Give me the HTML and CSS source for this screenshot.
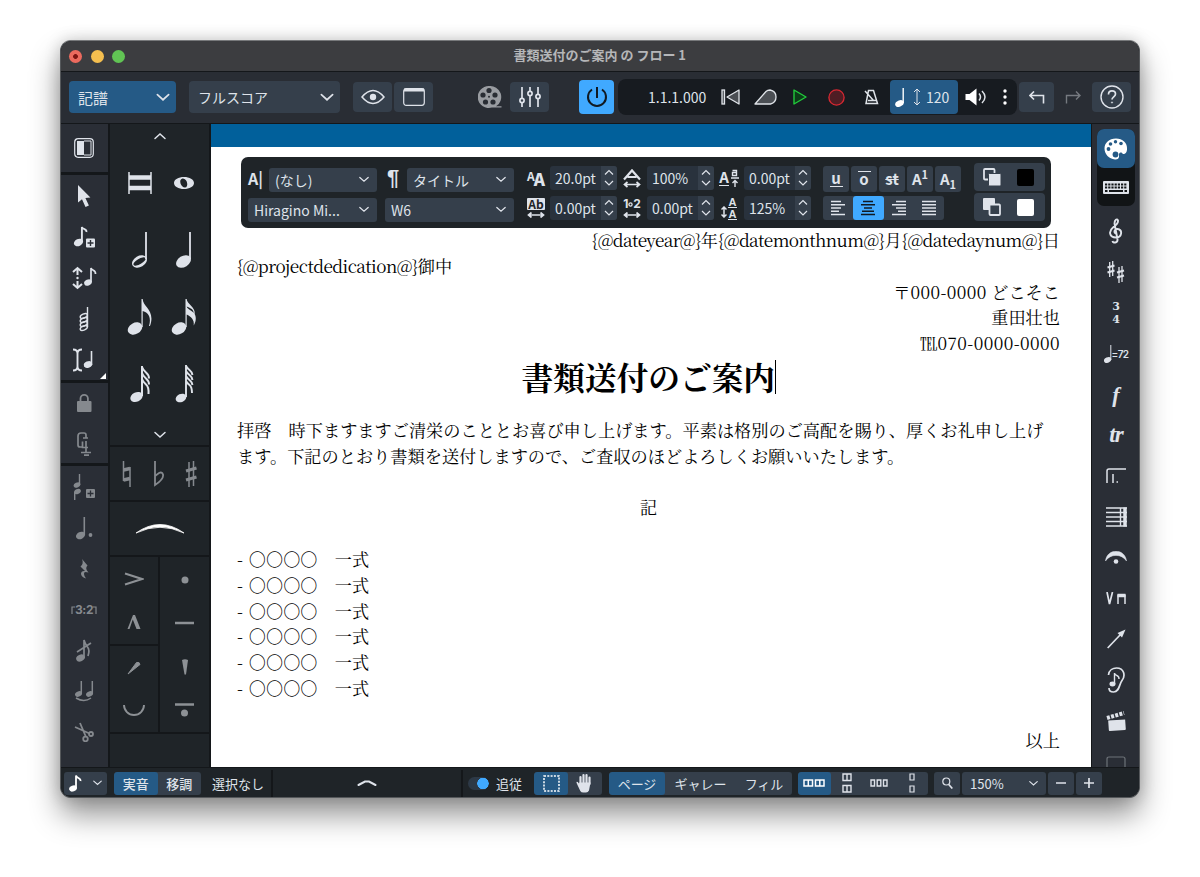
FILE: index.html
```html
<!DOCTYPE html>
<html lang="ja">
<head>
    <meta charset="UTF-8">
    <meta name="viewport" content="width=device-width, initial-scale=1.0">
    <title>書類送付のご案内 の フロー 1</title>
    <link rel="stylesheet" href="styles.css">
</head>
<body>
    <!-- shared symbols -->
    <svg class="defs" width="0" height="0">
        <symbol id="chev" viewBox="0 0 12 8"><path d="M1 1.5l5 4.5 5-4.5" fill="none" stroke="currentColor" stroke-width="1.5" stroke-linecap="round"/></symbol>
        <symbol id="spin" viewBox="0 0 16 24"><path d="M4 8.500l4-4 4 4M4 15l4 4 4-4" fill="none" stroke="currentColor" stroke-width="1.200"/></symbol>
        <symbol id="quarter" viewBox="0 0 24 40"><ellipse cx="11.500" cy="31.500" rx="8" ry="5.600" transform="rotate(-32 11.500 31.500)" fill="currentColor"/><path d="M18 2v27" stroke="currentColor" stroke-width="1.800"/></symbol>
        <symbol id="arrow-h" viewBox="0 0 18 6"><path d="M2 3h14M4.500 .5L1.500 3l3 2.500M13.500 .5l3 2.500-3 2.500" fill="none" stroke="currentColor" stroke-width="1.700"/></symbol>
    </svg>

    <div class="window">
        <div class="titlebar">
            <span class="light red"></span>
            <span class="light yellow"></span>
            <span class="light green"></span>
            <div class="title">書類送付のご案内 の フロー 1</div>
        </div>

        <div class="toolbar">
            <div class="select mode">記譜<svg width="14" height="9"><use href="#chev"/></svg></div>
            <div class="select layout">フルスコア<svg width="14" height="9"><use href="#chev"/></svg></div>
            <div class="btn eye">
                <svg width="24" height="16" viewBox="0 0 24 16"><path d="M1 8Q12-5 23 8Q12 21 1 8z" fill="none" stroke="currentColor" stroke-width="1.500"/><circle cx="12" cy="8" r="3.200" fill="currentColor"/></svg>
            </div>
            <div class="btn win">
                <svg width="22" height="18" viewBox="0 0 22 18"><rect x=".7" y=".7" width="20.600" height="16.600" rx="2.500" fill="none" stroke="currentColor" stroke-width="1.200"/><path d="M1 2h20" stroke="currentColor" stroke-width="3"/></svg>
            </div>
            <div class="film">
                <svg width="24" height="24" viewBox="0 0 24 24"><path d="M11 1a11 11 0 1 0 3 21.500h9.500v-1.200H18A11 11 0 0 0 11 1z" fill="currentColor"/><g fill="#292d34"><circle cx="11" cy="5.500" r="2.600"/><circle cx="17" cy="10" r="2.600"/><circle cx="15" cy="17" r="2.600"/><circle cx="7.500" cy="17" r="2.600"/><circle cx="5" cy="10" r="2.600"/><circle cx="11" cy="11.800" r="1"/></g></svg>
            </div>
            <div class="btn mixer">
                <svg width="22" height="20" viewBox="0 0 22 20" fill="none" stroke="currentColor" stroke-width="1.700"><path d="M3 0v11M3 16v4M11 0v4M11 9v11M19 0v7M19 12v8"/><circle cx="3" cy="13.500" r="2.100"/><circle cx="11" cy="6.500" r="2.100"/><circle cx="19" cy="9.500" r="2.100"/></svg>
            </div>
            <div class="power">
                <svg width="22" height="22" viewBox="0 0 22 22" fill="none" stroke="currentColor" stroke-width="2"><path d="M11 1v11M6 3.500a9 9 0 1 0 10 0"/></svg>
            </div>
            <div class="transport">
                <span class="time">1.1.1.000</span>
                <svg width="19" height="16" viewBox="0 0 19 16" fill="#4b4f54" stroke="#dfe3e8" stroke-width="1.300"><rect x="1" y="1" width="2.500" height="14"/><path d="M18 1v14L6 8z" stroke-linejoin="round"/></svg>
                <svg class="rewind" width="23" height="16" viewBox="0 0 23 16" fill="#4b4f54" stroke="#dfe3e8" stroke-width="1.300"><path d="M1 15h15.500q5.500-1.500 5.500-7 0-6-6-7-2.500 0-4 1.500z" stroke-linejoin="round"/></svg>
                <svg class="play" width="14" height="16" viewBox="0 0 14 16"><path d="M1 1v14l12-7z" fill="#0c3d18" stroke="#22c93b" stroke-width="1.400" stroke-linejoin="round"/></svg>
                <svg class="rec" width="17" height="17" viewBox="0 0 17 17"><circle cx="8.500" cy="8.500" r="7.600" fill="#4f1d24" stroke="#d92832" stroke-width="1.300"/></svg>
                <svg class="metro" width="15" height="16" viewBox="0 0 15 16" fill="none" stroke="#dfe3e8" stroke-width="1.500"><path d="M4.500 1.500h5l4 13H2z M4 11.500h8M1 2l8.500 9.500"/></svg>
                <div class="tempo">
                    <svg width="10" height="20" viewBox="0 0 10 20"><ellipse cx="4.500" cy="16.500" rx="4.500" ry="3.100" transform="rotate(-25 4.500 16.500)" fill="#fff"/><path d="M8.200 1v15" stroke="#fff" stroke-width="1.400"/></svg>
                    <svg class="updown" width="8" height="18" viewBox="0 0 8 18" fill="none" stroke="currentColor"><path d="M4 1v16M1 4l3-3 3 3M1 14l3 3 3-3"/></svg>
                    120
                </div>
                <svg class="speaker" width="22" height="18" viewBox="0 0 22 18"><path d="M.5 6h4l7-5.500v17L4.500 12h-4z" fill="#fff"/><path d="M14 5.500q3 3.500 0 7M17 3q6 6 0 12" fill="none" stroke="#dfe3e8" stroke-width="1.500"/></svg>
                <svg class="dots" width="4" height="16" viewBox="0 0 4 16" fill="#fff"><circle cx="2" cy="2" r="1.700"/><circle cx="2" cy="8" r="1.700"/><circle cx="2" cy="14" r="1.700"/></svg>
            </div>
            <div class="btn undo">
                <svg width="16" height="13" viewBox="0 0 16 13" fill="none" stroke="currentColor" stroke-width="1.600"><path d="M5 .5L1 4.500l4 4M1 4.500h13.500v8"/></svg>
            </div>
            <div class="redo">
                <svg width="16" height="13" viewBox="0 0 16 13" fill="none" stroke="currentColor" stroke-width="1.400"><path d="M11 .5l4 4-4 4M15 4.500H1.500v8"/></svg>
            </div>
            <div class="btn help">
                <svg width="24" height="24" viewBox="0 0 24 24" fill="none" stroke="currentColor"><circle cx="12" cy="12" r="11" stroke-width="1.400"/><path d="M8.500 9.500c0-5 7-4.500 7-.5 0 2.700-3.500 3-3.500 5.500" stroke-width="1.700"/><circle cx="12" cy="17.500" r=".6"/></svg>
            </div>
        </div>

        <div class="main">
            <div class="tools">
                <div class="group first">
                    <svg width="20" height="20" viewBox="0 0 20 20"><rect x=".7" y=".7" width="18.600" height="18.600" rx="3.500" fill="none" stroke="currentColor" stroke-width="1.200"/><path d="M3 3h7v14H3z" fill="currentColor"/><path d="M10 3h7v14h-7" fill="none" stroke="currentColor"/></svg>
                </div>
                <div class="group entry">
                    <svg width="22" height="24" viewBox="0 0 22 24"><path d="M5 1v17.500l4-3.300 3.500 7.800 3.400-1.500-3.500-7.500 5-.5z" fill="currentColor"/></svg>
                    <svg width="22" height="24" viewBox="0 0 22 24"><ellipse cx="5.500" cy="17.500" rx="4.800" ry="3.500" transform="rotate(-25 5.500 17.500)" fill="currentColor"/><path d="M8.900 17V2c1 3 5 1.500 4.500 5" fill="none" stroke="currentColor" stroke-width="1.900"/><rect x="13" y="13.500" width="9" height="9" rx="1" fill="currentColor"/><path d="M17.500 15v6M14.500 18h6" stroke="#2a2e36" stroke-width="1.400"/></svg>
                    <svg width="26" height="24" viewBox="0 0 26 24"><path d="M6.500 2v7M6.500 15v7M2 6l4.500-4L11 6M2 18l4.500 4 4.500-4" fill="none" stroke="currentColor" stroke-width="2"/><circle cx="6.500" cy="12" r="1.200" fill="currentColor"/><ellipse cx="17" cy="16.500" rx="4" ry="3" transform="rotate(-25 17 16.500)" fill="currentColor"/><path d="M20 16V2c1 3 5 1.500 4.500 6" fill="none" stroke="currentColor" stroke-width="1.700"/></svg>
                    <svg width="12" height="26" viewBox="0 0 12 26" fill="none" stroke="currentColor" stroke-width="1.400"><path d="M9.500 1v20"/><ellipse cx="5.800" cy="10" rx="3.800" ry="2" transform="rotate(-25 5.800 10)"/><ellipse cx="5.800" cy="14" rx="3.800" ry="2" transform="rotate(-25 5.800 14)"/><ellipse cx="5.800" cy="18" rx="3.800" ry="2" transform="rotate(-25 5.800 18)"/><ellipse cx="5.800" cy="22" rx="3.800" ry="2" transform="rotate(-25 5.800 22)"/></svg>
                    <svg width="24" height="24" viewBox="0 0 24 24"><path d="M1 1.500q4.500 0 4.500 4v13q0 4-4.500 4M10 1.500q-4.500 0-4.500 4v13q0 4 4.500 4" fill="none" stroke="currentColor" stroke-width="1.900"/><ellipse cx="16" cy="16.500" rx="4.300" ry="3.200" transform="rotate(-25 16 16.500)" fill="currentColor"/><path d="M19.500 17V3" stroke="currentColor" stroke-width="1.600"/></svg>
                    <span class="corner"></span>
                </div>
                <div class="group dim lock">
                    <svg width="16" height="20" viewBox="0 0 16 20"><rect x="1" y="8" width="14.500" height="11" rx="1" fill="currentColor"/><path d="M4.500 9V5.500a3.700 3.700 0 0 1 7.400 0V9" fill="none" stroke="currentColor" stroke-width="1.800"/></svg>
                    <svg width="16" height="24" viewBox="0 0 16 24" fill="none" stroke="currentColor" stroke-width="1.700"><path d="M10 6V3q0-2-2-2H5Q2 1 2 4v9q0 2 2 2h3M7 6h5M10 9v12M6.500 9.500v6H12M5 20.500h10M8 23.200h5"/></svg>
                </div>
                <div class="group dim edit">
                    <svg width="22" height="26" viewBox="0 0 22 26"><ellipse cx="4" cy="11" rx="3.500" ry="2.500" transform="rotate(-25 4 11)" fill="currentColor"/><ellipse cx="4.500" cy="17.500" rx="3.500" ry="2.500" transform="rotate(-25 4.500 17.500)" fill="currentColor"/><path d="M6.500 0v11M1.700 18v8" stroke="currentColor" stroke-width="1.400"/><rect x="13" y="15" width="9" height="9" rx="1" fill="currentColor"/><path d="M17.500 16.500v6M14.500 19.500h6" stroke="#2a2e36" stroke-width="1.300"/></svg>
                    <svg width="18" height="24" viewBox="0 0 18 24"><ellipse cx="5.500" cy="19.500" rx="4.700" ry="3.500" transform="rotate(-25 5.500 19.500)" fill="currentColor"/><path d="M9.300 1v18" stroke="currentColor" stroke-width="1.600"/><circle cx="15.500" cy="19" r="1.900" fill="currentColor"/></svg>
                    <svg width="10" height="22" viewBox="0 0 10 22"><path d="M3 1l5.500 6.500q-3 3 1 7-5-1.500-4.500 1.500.2 2.500 2 4.500-4.500-1.500-5-4.500 0-3.500 4-3L1.500 8.500Q5 5.500 3 1z" fill="currentColor"/></svg>
                    <span class="tuplet"><svg width="4" height="9" viewBox="0 0 4 9"><path d="M1 9V2h3" fill="none" stroke="currentColor" stroke-width="1.200"/></svg>3:2<svg width="4" height="9" viewBox="0 0 4 9"><path d="M0 2h3v7" fill="none" stroke="currentColor" stroke-width="1.200"/></svg></span>
                    <svg width="18" height="24" viewBox="0 0 18 24"><ellipse cx="5.500" cy="19" rx="4.500" ry="3.300" transform="rotate(-25 5.500 19)" fill="currentColor"/><path d="M9 19V1q1 4 3.500 7t.5 9M2 13L16 4" fill="none" stroke="currentColor" stroke-width="1.700"/></svg>
                    <svg width="20" height="22" viewBox="0 0 20 22"><ellipse cx="4.500" cy="14" rx="3.600" ry="2.600" transform="rotate(-25 4.500 14)" fill="currentColor"/><ellipse cx="15.500" cy="14" rx="3.600" ry="2.600" transform="rotate(-25 15.500 14)" fill="currentColor"/><path d="M7.300 1v13M18.300 1v13M2 18q8 5 15 0" fill="none" stroke="currentColor" stroke-width="1.500"/></svg>
                    <svg width="20" height="20" viewBox="0 0 20 20" fill="none" stroke="currentColor" stroke-width="1.800"><path d="M1 5l14.500 6.500M6 1l6 14"/><circle cx="17" cy="12" r="2"/><circle cx="11.500" cy="17" r="2.300"/></svg>
                </div>
            </div>

            <div class="notes">
                <div class="durations">
                    <svg class="up" width="14" height="8"><use href="#chev"/></svg>
                    <div class="pair">
                        <svg width="26" height="24" viewBox="0 0 26 24"><path d="M2 1v22M24 1v22" stroke="currentColor" stroke-width="1.500"/><path d="M2 6.500h22M2 17h22" stroke="currentColor" stroke-width="4.400"/></svg>
                        <svg width="22" height="14" viewBox="0 0 22 14"><path d="M11 1c5.500 0 10 2.500 10 6s-4.500 6-10 6S1 10.500 1 7s4.500-6 10-6zm-1.500 1.500C5 3.500 8 11.500 12 11.500S14.500 2 9.500 2.500z" fill="currentColor"/></svg>
                    </div>
                    <div class="pair">
                        <svg width="24" height="40" viewBox="0 0 24 40"><g transform="rotate(-30 11.500 31.500)"><path fill-rule="evenodd" d="M3.500 31.500a8 5.600 0 1 0 16 0a8 5.600 0 1 0-16 0zM4.700 31.500a6.800 2.700 0 1 0 13.600 0a6.800 2.700 0 1 0-13.600 0z" fill="currentColor"/></g><path d="M18 2v27" stroke="currentColor" stroke-width="1.800"/></svg>
                        <svg width="24" height="40"><use href="#quarter"/></svg>
                    </div>
                    <div class="pair">
                        <svg width="26" height="40" viewBox="0 0 26 40"><ellipse cx="8" cy="31.500" rx="7.700" ry="5.600" transform="rotate(-30 8 31.500)" fill="currentColor"/><path d="M14.500 30V2h1.200c0 8 13 11 7.300 27h-1c3-10-2-14-6.300-15v16z" fill="currentColor"/></svg>
                        <svg width="26" height="40" viewBox="0 0 26 40"><ellipse cx="8" cy="31.500" rx="7.700" ry="5.600" transform="rotate(-30 8 31.500)" fill="currentColor"/><path d="M14.500 30V2h1.200c0 5 9 8 8 15 2 4 1 8-1 11.500 1-6-3-9-7-11V30zM15.700 9.500c.5 3 5 3.500 7 6.500 0-4-4-5-7-6.500z" fill="currentColor"/></svg>
                    </div>
                    <div class="pair">
                        <svg width="24" height="40" viewBox="0 0 24 40"><ellipse cx="8.500" cy="33" rx="6.500" ry="4.600" transform="rotate(-25 8.500 33)" fill="currentColor"/><path d="M14 32V2M14 3q1 3 4 5.500t3 6M14 9q1 3 4 5.500t3 6M14 15q1 3 4 5.500t2.500 9.500" fill="none" stroke="currentColor" stroke-width="2"/></svg>
                        <svg width="24" height="40" viewBox="0 0 24 40"><ellipse cx="9" cy="34" rx="5.600" ry="4" transform="rotate(-25 9 34)" fill="currentColor"/><path d="M14 33V1M14 2q1 2 3.500 4t3 5M14 7q1 2 3.500 4t3 5M14 12q1 2 3.500 4t3 5M14 17q1 2 3.500 4t2.500 8" fill="none" stroke="currentColor" stroke-width="1.900"/></svg>
                    </div>
                    <svg class="down" width="14" height="8"><use href="#chev"/></svg>
                </div>
                <div class="accidentals">
                    <svg width="10" height="28" viewBox="0 0 10 28" fill="none" stroke="currentColor"><path d="M1.500 1v20M8 7v20" stroke-width="1.500"/><path d="M1.500 10L8 8.500M1.500 20L8 18.500" stroke-width="3.400"/></svg>
                    <svg width="12" height="28" viewBox="0 0 12 28" fill="none" stroke="currentColor"><path d="M2 1v24q9-6 8-10.500-1-3-4-1.500l-4 3" stroke-width="1.800"/></svg>
                    <svg width="12" height="28" viewBox="0 0 12 28" fill="none" stroke="currentColor"><path d="M4 2v25M8.500 1v25" stroke-width="1.500"/><path d="M1 11l10.500-3M1 20l10.500-3" stroke-width="3"/></svg>
                </div>
                <div class="slur">
                    <svg width="50" height="12" viewBox="0 0 50 12"><path d="M1 10Q25-7 49 10Q25-1.500 1 10z" fill="#fff" stroke="#fff" stroke-width=".8"/></svg>
                </div>
                <div class="articulations">
                    <div class="col">
                        <div class="cell">
                            <svg width="20" height="14" viewBox="0 0 20 14"><path d="M1 1.500L18 7 1 12.500" fill="none" stroke="currentColor" stroke-width="2"/></svg>
                            <svg width="14" height="16" viewBox="0 0 14 16"><path d="M.5 15L6 1h2l5.500 14h-4L5.800 5.500 2.500 15z" fill="currentColor"/></svg>
                        </div>
                        <div class="cell">
                            <svg width="14" height="14" viewBox="0 0 14 14"><path d="M1 13L9.500 1.500q3-1 3.500 2z" fill="currentColor" stroke="currentColor"/></svg>
                            <svg width="22" height="13" viewBox="0 0 22 13"><path d="M1 1a10 10 0 0 0 20 0" fill="none" stroke="currentColor" stroke-width="1.900"/></svg>
                        </div>
                    </div>
                    <div class="col right">
                        <svg width="8" height="8" viewBox="0 0 8 8"><circle cx="4" cy="4" r="3.500" fill="currentColor"/></svg>
                        <svg width="19" height="4" viewBox="0 0 19 4"><path d="M0 2h19" stroke="currentColor" stroke-width="2.500"/></svg>
                        <svg width="8" height="16" viewBox="0 0 8 16"><path d="M1 1q3-1.500 6 0L5 15.500H3.500z" fill="currentColor"/></svg>
                        <svg width="19" height="14" viewBox="0 0 19 14"><path d="M0 1.500h19" stroke="currentColor" stroke-width="2.500"/><circle cx="9.500" cy="10" r="3.500" fill="currentColor"/></svg>
                    </div>
                </div>
            </div>

            <div class="canvas">
                <div class="page">
                    <p class="end"><span class="token">{@dateyear@}</span>年<span class="token">{@datemonthnum@}</span>月<span class="token">{@datedaynum@}</span>日</p>
                    <p><span class="token">{@projectdedication@}</span>御中</p>
                    <p class="end">〒<span class="digits">000-0000</span> どこそこ</p>
                    <p class="end">重田壮也</p>
                    <p class="end">℡<span class="digits">070-0000-0000</span></p>
                    <h1>書類送付のご案内</h1>
                    <p class="body">拝啓　時下ますますご清栄のこととお喜び申し上げます。平素は格別のご高配を賜り、厚くお礼申し上げ<br>ます。下記のとおり書類を送付しますので、ご査収のほどよろしくお願いいたします。</p>
                    <p class="middle">記</p>
                    <ul>
                        <li>○○○○　一式</li>
                        <li>○○○○　一式</li>
                        <li>○○○○　一式</li>
                        <li>○○○○　一式</li>
                        <li>○○○○　一式</li>
                        <li>○○○○　一式</li>
                    </ul>
                    <p class="end">以上</p>
                </div>

                <div class="popover">
                    <div class="styles">
                        <div class="line"><b class="glyph">A|</b><div class="drop">(なし)<svg width="10" height="7"><use href="#chev"/></svg></div></div>
                        <div class="line"><div class="drop">Hiragino Mi...<svg width="10" height="7"><use href="#chev"/></svg></div></div>
                    </div>
                    <div class="styles">
                        <div class="line"><b class="glyph pil">¶</b><div class="drop">タイトル<svg width="10" height="7"><use href="#chev"/></svg></div></div>
                        <div class="line"><div class="drop">W6<svg width="10" height="7"><use href="#chev"/></svg></div></div>
                    </div>
                    <div class="numbers">
                        <div class="glyph"><small>A</small><b class="size">A</b></div>
                        <div class="num">20.0pt<svg width="16" height="24"><use href="#spin"/></svg></div>
                        <div class="glyph"><svg width="18" height="20" viewBox="0 0 18 20" fill="none" stroke="currentColor" stroke-width="2.200"><path d="M1 11.500L9 2.500l8 9M4.500 9h9"/><path d="M2 16.500h14M4.500 14l-3 2.500 3 2.500M13.500 14l3 2.500-3 2.500" stroke-width="1.700"/></svg></div>
                        <div class="num">100%<svg width="16" height="24"><use href="#spin"/></svg></div>
                        <div class="glyph"><span class="base">A</span><svg width="8" height="18" viewBox="0 0 8 18" fill="none" stroke="currentColor" stroke-width="1.400"><path d="M1.500 1.500h4v5h-4v-3h4M0 9h8M4 18v-6M1.500 14L4 11.500 6.500 14"/></svg></div>
                        <div class="num">0.00pt<svg width="16" height="24"><use href="#spin"/></svg></div>
                        <div class="glyph stack"><span class="ab">Ab</span><svg width="18" height="6"><use href="#arrow-h"/></svg></div>
                        <div class="num">0.00pt<svg width="16" height="24"><use href="#spin"/></svg></div>
                        <div class="glyph stack"><span class="gap">1<svg width="5" height="5" viewBox="0 0 5 5"><circle cx="2.500" cy="2.500" r="1.600" fill="none" stroke="currentColor" stroke-width="1.300"/></svg>2</span><svg width="18" height="6"><use href="#arrow-h"/></svg></div>
                        <div class="num">0.00pt<svg width="16" height="24"><use href="#spin"/></svg></div>
                        <div class="glyph"><svg class="vert" width="6" height="12" viewBox="0 0 6 12" fill="none" stroke="currentColor" stroke-width="1.500"><path d="M3 1v10M.5 3.500L3 1l2.500 2.500M.5 8.500L3 11l2.500-2.500"/></svg><span class="leading"><span>A</span><span>A</span></span></div>
                        <div class="num">125%<svg width="16" height="24"><use href="#spin"/></svg></div>
                    </div>
                    <div class="format">
                        <div class="marks">
                            <span><i class="under">u</i></span><span><i class="over">o</i></span><span><s>st</s></span><span>A<sup>1</sup></span><span>A<sub>1</sub></span>
                        </div>
                        <div class="aligns">
                            <span><svg width="14" height="16" viewBox="0 0 14 16"><path d="M0 1.500h10M0 4.800h14M0 8h10M0 11.300h8M0 14.500h14" stroke="currentColor" stroke-width="1.400"/></svg></span>
                            <span class="on"><svg width="14" height="16" viewBox="0 0 14 16"><path d="M2 1.500h10M0 4.800h14M3 8h8M1 11.300h12M0 14.500h14" stroke="currentColor" stroke-width="1.500"/></svg></span>
                            <span><svg width="14" height="16" viewBox="0 0 14 16"><path d="M4 1.500h10M0 4.800h14M4 8h10M6 11.300h8M0 14.500h14" stroke="currentColor" stroke-width="1.400"/></svg></span>
                            <span><svg width="14" height="16" viewBox="0 0 14 16"><path d="M0 1.500h14M0 4.800h14M0 8h14M0 11.300h14M0 14.500h14" stroke="currentColor" stroke-width="1.400"/></svg></span>
                        </div>
                    </div>
                    <div class="colors">
                        <div class="color"><svg width="18" height="18" viewBox="0 0 18 18"><rect x="1" y="1" width="10.500" height="10.500" rx="1" fill="none" stroke="currentColor" stroke-width="1.800"/><rect x="5.500" y="5.500" width="12.500" height="12.500" rx="1" fill="currentColor" stroke="#353f4b"/></svg><span class="swatch black"></span></div>
                        <div class="color"><svg width="18" height="18" viewBox="0 0 18 18"><rect width="12" height="12" rx="1" fill="currentColor"/><rect x="6.500" y="6.500" width="10.500" height="10.500" rx="1" fill="#353f4b" stroke="currentColor" stroke-width="1.800"/></svg><span class="swatch"></span></div>
                    </div>
                </div>
            </div>

            <div class="panels">
                <div class="switch">
                    <div class="on"><svg width="24" height="22" viewBox="0 0 24 22"><path d="M12 .5C5 .5 .5 5 .5 10.500S5 21 11 21.500c2.500.2 4-1 4-3 0-2-.5-4 2.500-4l1.500 1.500c2 .5 4-1.500 4-4.500C23.500 4.500 18.500.5 12 .5z" fill="#fff"/><g fill="#255a86"><circle cx="4.500" cy="11" r="1.900"/><circle cx="6.500" cy="6" r="1.800"/><circle cx="11.500" cy="3.700" r="1.700"/><circle cx="17" cy="5.500" r="1.800"/><circle cx="11.500" cy="16.500" r="2.900"/></g></svg></div>
                    <div><svg width="26" height="13" viewBox="0 0 26 13"><rect width="26" height="13" rx="1" fill="#dfe3ea"/><path d="M2 3.500h22M2 6.500h22" stroke="#111416" stroke-width="1.800" stroke-dasharray="2.200 1"/><path d="M2 10h2.500M6 10h14M21.500 10H24" stroke="#111416" stroke-width="1.800"/></svg></div>
                </div>
                <div class="list">
                    <svg width="14" height="26" viewBox="0 0 14 26" fill="none" stroke="currentColor" stroke-width="1.900"><path d="M7 15.500c-3-1-1-5 1.500-4.500 5.500 1 4.500 8.500-1.500 8.500C0 19.500-.5 13 4 9.500 8 6.500 9.500 5 9 2.500 8 0 5.500 2 5.500 5.500l3 16c.3 3.500-4.500 4-5 1.500"/></svg>
                    <svg width="20" height="24" viewBox="0 0 20 24" fill="none" stroke="currentColor" stroke-width="1.300"><path d="M3.700 2v15M6.700 1v15M13 7v16M16 6v16"/><path d="M1.500 7.500l7-2M1.500 12.500l7-2M11 12.500l7-2M11 17.500l7-2" stroke-width="2"/></svg>
                    <span class="meter"><span>3</span><span>4</span></span>
                    <span class="bpm"><svg width="8" height="18" viewBox="0 0 8 18"><ellipse cx="3.600" cy="15" rx="3.800" ry="2.700" transform="rotate(-25 3.600 15)" fill="currentColor"/><path d="M6.800 0v15" stroke="currentColor"/></svg>=72</span>
                    <span class="forte">f</span>
                    <span class="trill">tr</span>
                    <svg width="20" height="16" viewBox="0 0 20 16" fill="none" stroke="currentColor" stroke-width="1.500"><path d="M1 15V3q0-2 2-2h17M7 6v9M10.500 14h1.500"/></svg>
                    <svg width="21" height="20" viewBox="0 0 21 20" fill="none" stroke="currentColor" stroke-width="1.400"><path d="M0 1h21M0 5.500h21M0 10h21M0 14.500h21M0 19h21M14.500 1v18"/><path d="M19 .5v19" stroke-width="3.500"/></svg>
                    <svg width="22" height="14" viewBox="0 0 22 14"><path d="M.5 10C2-3 20-3 21.500 10 17 2.500 5 2.500.5 10z" fill="currentColor" stroke="currentColor" stroke-width=".5"/><circle cx="11" cy="10.500" r="2.300" fill="currentColor"/></svg>
                    <svg width="20" height="14" viewBox="0 0 20 14" fill="none" stroke="currentColor"><path d="M1 0l2.500 12L6.500 0" stroke-width="1.700"/><path d="M12 12V2.500M19 12V2.500" stroke-width="1.500"/><path d="M11.500 3.500h8" stroke-width="3.500"/></svg>
                    <svg width="19" height="20" viewBox="0 0 19 20"><path d="M.7 19L14 5" stroke="currentColor" stroke-width="1.700"/><path d="M18.500.5L10.500 4l4.500 4.500z" fill="currentColor"/></svg>
                    <svg width="18" height="26" viewBox="0 0 18 26" fill="none" stroke="currentColor" stroke-width="1.700"><path d="M1.500 8C2 3 6 1 9.500 1c8 0 9 8 5.500 12.500C12 17.500 12.500 25 6.500 25 3 25 2 23 2 21"/><ellipse cx="5.500" cy="17" rx="2.200" ry="1.600" fill="currentColor"/><path d="M7.500 17V6c0 3 5 2 4.500 6" stroke-width="1.400"/></svg>
                    <svg width="21" height="20" viewBox="0 0 21 20"><path d="M2.500 9h17v9.500q0 1-1 1h-15q-1 0-1-1z" fill="currentColor" transform="rotate(-4 11 14)"/><path d="M1 7l17-5" stroke="currentColor" stroke-width="4" stroke-dasharray="3 1.300"/></svg>
                    <svg width="20" height="12" viewBox="0 0 20 12"><path d="M1 12V3q0-2 2-2h14q2 0 2 2v9" fill="none" stroke="#6d7278" stroke-width="1.200"/></svg>
                </div>
            </div>
        </div>

        <div class="status">
            <div class="sbtn note"><svg width="13" height="18" viewBox="0 0 13 18"><ellipse cx="4" cy="14.500" rx="4" ry="2.900" transform="rotate(-20 4 14.500)" fill="#fff"/><path d="M7 14.500V1.500c.5 3 5 2 4.500 5.500" fill="none" stroke="#fff" stroke-width="1.800"/></svg><svg width="9" height="6"><use href="#chev"/></svg></div>
            <div class="seg pitch"><span class="on">実音</span><span>移調</span></div>
            <span class="selection">選択なし</span>
            <div class="expand"><svg width="20" height="8" viewBox="0 0 20 8"><path d="M1.500 6L8 2.500h4L18.500 6" fill="none" stroke="currentColor" stroke-width="2" stroke-linecap="round"/></svg></div>
            <span class="toggle"></span>
            <span class="follow">追従</span>
            <div class="seg pointer">
                <span class="on"><svg width="17" height="17" viewBox="0 0 17 17"><rect x="1" y="1" width="15" height="15" fill="none" stroke="#fff" stroke-width="1.500" stroke-dasharray="2 1.300"/></svg></span>
                <span><svg width="18" height="20" viewBox="0 0 18 20"><path d="M4.500 11V4M7.500 10V2M10.500 10V2M13.500 11V4.500" stroke="currentColor" stroke-width="2.200" stroke-linecap="round"/><path d="M3.500 9.500H14.700q0 2 1.500-.5 2-1 1 1.500l-3.500 7.500q-1 1.500-3 1.500H8q-2 0-3-2z" fill="currentColor" transform="matrix(-1 0 0 1 18 0)"/></svg></span>
            </div>
            <div class="seg views"><span class="on">ページ</span><span>ギャレー</span><span>フィル</span></div>
            <div class="seg spreads">
                <span class="on"><svg width="22" height="8" viewBox="0 0 22 8" fill="none" stroke="#fff" stroke-width="1.500"><path d="M1 1h8.500v6H1zM5.300 1v6M12.500 1H21v6h-8.500zM16.800 1v6"/></svg></span>
                <span><svg width="10" height="20" viewBox="0 0 10 20" fill="none" stroke="currentColor" stroke-width="1.400"><path d="M1 1h8v6.500H1zM5 1v6.500M1 12.500h8V19H1zM5 12.500V19"/></svg></span>
                <span><svg width="18" height="8" viewBox="0 0 18 8" fill="none" stroke="currentColor" stroke-width="1.400"><path d="M1 1h3.500v6H1zM7.200 1h3.600v6H7.200zM13.500 1H17v6h-3.500z"/></svg></span>
                <span><svg width="6" height="20" viewBox="0 0 6 20" fill="none" stroke="currentColor" stroke-width="1.200"><path d="M1 1h4v6H1zM1 13h4v6H1z"/></svg></span>
            </div>
            <div class="sbtn search"><svg width="11" height="12" viewBox="0 0 11 12" fill="none" stroke="currentColor"><circle cx="4.300" cy="4.500" r="3.500" stroke-width="1.200"/><path d="M6.800 7.500l3.500 4" stroke-width="1.700"/></svg></div>
            <div class="sbtn zoom">150%<svg width="9" height="7"><use href="#chev"/></svg></div>
            <div class="sbtn step"><svg width="10" height="10" viewBox="0 0 10 10"><path d="M0 5h10" stroke="currentColor" stroke-width="1.700"/></svg></div>
            <div class="sbtn step"><svg width="10" height="10" viewBox="0 0 10 10"><path d="M0 5h10M5 0v10" stroke="currentColor" stroke-width="1.700"/></svg></div>
        </div>
    </div>
</body>
</html>
```
FILE: styles.css
```css
* {
    box-sizing: border-box;
}

body {
    margin: 0;
    height: 877px;
    overflow: hidden;
    background: #fff;
    font-family: "Noto Sans CJK JP", sans-serif;
    font-size: 14px;
    color: #dfe3ea;
}

svg {
    display: block;
    flex: none;
}

.defs {
    position: absolute;
}

.window {
    width: 1080px;
    height: 758px;
    margin: 40px 0 0 60px;
    display: flex;
    flex-direction: column;
    border: 1px solid #55585b;
    border-top-color: #77797b;
    border-radius: 11px;
    overflow: hidden;
    background: #14171a;
    box-shadow: 0 17px 30px rgba(0, 0, 0, 0.42), 0 0 16px rgba(0, 0, 0, 0.18);
}

/* title bar */
.titlebar {
    height: 30px;
    flex: none;
    display: flex;
    align-items: center;
    padding-left: 8px;
    background: #3c3d40;
}

.light {
    width: 13px;
    height: 13px;
    border-radius: 50%;
    margin-right: 8.5px;
}

.red {
    background: radial-gradient(circle, #7d1512 2px, #ec6a5e 2.8px);
}

.yellow {
    background: #f5bf4f;
}

.green {
    background: #61c454;
}

.title {
    flex: 1;
    text-align: center;
    padding: 0 73px 2px 0;
    font-size: 13px;
    line-height: 28px;
    font-weight: 700;
    color: #b5b6b8;
}

/* top toolbar */
.toolbar {
    height: 51px;
    flex: none;
    margin-top: 1px;
    display: flex;
    align-items: center;
    padding: 0 0 1px 8px;
    background: #292d34;
}

.select {
    height: 32px;
    display: flex;
    align-items: center;
    justify-content: space-between;
    padding: 0 6px 0 9px;
    border-radius: 4px;
    background: #353f4b;
}

.mode {
    width: 107px;
    font-size: 15px;
    background: #255a86;
}

.layout {
    width: 151px;
    margin-left: 13px;
}

.btn {
    width: 39px;
    height: 30px;
    display: flex;
    align-items: center;
    justify-content: center;
    border-radius: 4px;
    background: #353f4b;
}

.eye {
    margin-left: 13px;
}

.win {
    margin-left: 2px;
}

.film {
    margin: 0 8px 0 45px;
    color: #999ca1;
}

.power {
    width: 35px;
    height: 34px;
    margin: 0 4px 0 30px;
    display: flex;
    align-items: center;
    justify-content: center;
    border-radius: 4px;
    background: #40a9ff;
    color: #111a22;
}

.transport {
    width: 399px;
    height: 36px;
    display: flex;
    align-items: center;
    border-radius: 8px;
    background: #171b20;
}

.time {
    width: 103px;
    padding-left: 30px;
}

.rewind {
    margin-left: 14px;
}

.play {
    margin-left: 16px;
}

.rec {
    margin-left: 21px;
}

.metro {
    margin: 0 11px 0 19px;
}

.tempo {
    width: 68px;
    height: 34px;
    padding-left: 5px;
    display: flex;
    align-items: center;
    border-radius: 4px;
    background: #255a86;
}

.updown {
    margin: 0 5px 0 8px;
}

.speaker {
    margin: 0 16px 0 7px;
}

.undo {
    width: 35px;
    margin-left: 2px;
}

.redo {
    margin: 0 11px;
    color: #767a80;
}

/* left tool column */
.main {
    flex: 1;
    min-height: 0;
    margin-top: 1px;
    display: flex;
}

.tools {
    width: 47px;
    display: flex;
    flex-direction: column;
    gap: 3px;
}

.group {
    display: grid;
    grid-auto-rows: 40.8px;
    align-content: start;
    place-items: center;
    padding-right: 1px;
    background: #2a2e36;
}

.first {
    height: 48px;
    align-content: center;
}

.entry {
    position: relative;
    height: 205px;
    padding-top: 1px;
}

.corner {
    position: absolute;
    right: 2px;
    bottom: 1px;
    border-left: 6px solid transparent;
    border-bottom: 6px solid #fff;
}

.lock {
    height: 80px;
}

.edit {
    flex: 1;
    padding-top: 1px;
}

.dim {
    color: #85898e;
}

.tuplet {
    display: flex;
    align-items: center;
    font: bold 12px Inter, sans-serif;
    letter-spacing: -0.4px;
}

/* note panel */
.notes {
    width: 99px;
    margin: 0 2px;
    display: flex;
    flex-direction: column;
    gap: 2px;
    color: #dfe3ea;
}

.notes > div {
    background: #1f2428;
}

.durations {
    height: 321px;
    display: flex;
    flex-direction: column;
    align-items: center;
}

.up {
    margin: 8px 0 9px;
    transform: scaleY(-1);
}

.pair {
    height: 67px;
    width: 87px;
    margin-left: 5px;
    display: grid;
    grid-template-columns: 1fr 1fr;
    place-items: center;
}

.down {
    margin-top: 14px;
}

.accidentals {
    height: 53px;
    display: flex;
    align-items: center;
    justify-content: space-between;
    padding: 0 12px;
    color: #85898e;
}

.slur {
    height: 53px;
    display: flex;
    align-items: center;
    justify-content: center;
}

.notes > .articulations {
    height: 175px;
    display: flex;
    gap: 2px;
    background: none;
    color: #8d9195;
}

.notes::after {
    content: "";
    flex: 1;
    background: #1f2428;
}

.col {
    width: 48px;
    display: flex;
    flex-direction: column;
    gap: 2px;
}

.cell {
    flex: 1;
    display: flex;
    flex-direction: column;
    align-items: center;
    justify-content: space-around;
    padding-top: 1px;
    background: #1f2428;
}

.right {
    width: 49px;
    display: grid;
    grid-auto-rows: 43.5px;
    place-items: center;
    gap: 0;
    padding-top: 1px;
    background: #1f2428;
}

/* score page */
.canvas {
    position: relative;
    width: 880px;
    margin-right: 1px;
    padding-top: 23px;
    background: #01609b;
}

.page {
    height: 620px;
    padding: 80px 31px 0 26px;
    background: #fff;
    color: #000;
    font-family: "Noto Serif CJK JP", "Noto Sans CJK JP", serif;
    font-size: 17.2px;
    line-height: 25.8px;
}

.page p {
    margin: 0;
    white-space: nowrap;
}

.page .end {
    text-align: right;
}

.token {
    letter-spacing: -0.56px;
}

.digits {
    letter-spacing: 0.42px;
}

.page h1 {
    width: 254px;
    height: 34px;
    margin: 4px auto 23px;
    border-right: 1px solid #000;
    font-size: 31.7px;
    line-height: 34px;
    white-space: nowrap;
}

.page .middle {
    margin: 25.8px 0;
    text-align: center;
}

.page ul {
    margin: 0 0 25.8px;
    padding: 0;
    list-style: none;
}

.page li::before {
    content: "- ";
    letter-spacing: 0.7px;
}

/* floating text format popover */
.popover {
    position: absolute;
    left: 30px;
    top: 33px;
    width: 810px;
    height: 71px;
    padding: 6px 6px 0 7px;
    display: flex;
    border-radius: 7px;
    background: #1f2428;
    font-size: 14px;
}

.styles {
    width: 129px;
    margin-right: 8px;
    padding-top: 5px;
    display: flex;
    flex-direction: column;
    gap: 7px;
}

.line {
    display: flex;
    align-items: center;
    height: 23px;
}

.line .glyph {
    width: 21px;
    font-size: 16px;
    line-height: 20px;
    padding-bottom: 3px;
}

.line .pil {
    width: 22px;
    padding-left: 2px;
    font: bold 22px "Liberation Sans", sans-serif;
}

.drop {
    flex: 1;
    height: 24px;
    padding: 0 8px 0 6px;
    display: flex;
    align-items: center;
    justify-content: space-between;
    border-radius: 3px;
    background: #353f4b;
}

.numbers {
    display: grid;
    grid-template-columns: 28px 67px 30px 67px 30px 67px;
    grid-template-rows: 24px 24px;
    gap: 6px 0;
    padding-top: 3px;
}

.numbers .glyph {
    display: flex;
    align-items: center;
    justify-content: center;
    font: bold 15px "Noto Sans CJK JP", sans-serif;
}

.numbers small {
    font-size: 12px;
    margin-bottom: 5px;
}

.numbers .size {
    font-size: 17px;
    margin-left: -1px;
}

.base {
    height: 16px;
    line-height: 13px;
    margin-right: 2px;
    border-bottom: 1.5px solid;
}

.numbers .stack {
    flex-direction: column;
    gap: 2px;
}

.ab {
    padding: 0 1px;
    border-radius: 1px;
    background: #dfe3ea;
    color: #1f2428;
    font: bold 12px/12px "Noto Sans CJK JP", sans-serif;
}

.gap {
    display: flex;
    align-items: center;
    font: bold 12px/12px Inter, sans-serif;
}

.vert {
    margin-top: 8px;
}

.leading {
    display: flex;
    flex-direction: column;
    gap: 1px;
    margin-left: 1px;
    font: bold 11px/10px "Liberation Sans", sans-serif;
}

.leading span {
    padding: 0 1px;
    border-bottom: 1px solid;
}

.num {
    display: flex;
    align-items: center;
    justify-content: space-between;
    padding-left: 5px;
    border-radius: 3px;
    background: #29323d;
    overflow: hidden;
}

.num svg {
    background: #353f4b;
}

.format {
    width: 139px;
    margin: 3px 12px 0 12px;
}

.marks {
    display: flex;
    gap: 2px;
    margin-bottom: 4px;
}

.marks > span {
    width: 26px;
    height: 26px;
    border-radius: 3px;
    background: #353f4b;
    text-align: center;
    font: bold 15px/25px "Noto Sans CJK JP", sans-serif;
}

.marks i {
    display: block;
    width: 13px;
    height: 15px;
    margin: 6px auto 0;
    font-style: normal;
    line-height: 11px;
}

.under {
    border-bottom: 1.5px solid;
}

.over {
    border-top: 1.5px solid;
}

.marks .over {
    margin-top: 5px;
    line-height: 14px;
}

.marks sup,
.marks sub {
    font-size: 11px;
    line-height: 0;
}

.aligns {
    width: 121px;
    height: 24px;
    display: flex;
    border-radius: 3px;
    overflow: hidden;
    background: #353f4b;
}

.aligns span {
    flex: 1;
    display: grid;
    place-items: center;
}

.aligns .on {
    border-radius: 3px;
    background: #40a9ff;
    color: #111a22;
}

.colors {
    display: flex;
    flex-direction: column;
    gap: 2px;
}

.color {
    width: 71px;
    height: 28px;
    padding: 0 11px 0 9px;
    display: flex;
    align-items: center;
    justify-content: space-between;
    border-radius: 4px;
    background: #353f4b;
}

.swatch {
    width: 17px;
    height: 17px;
    border-radius: 2px;
    background: #fff;
}

.black {
    background: #000;
}

/* right panel */
.panels {
    flex: 1;
    padding: 5px 3px 0 5px;
    background: #2a2e36;
    overflow: hidden;
}

.switch {
    width: 38px;
    height: 77px;
    border-radius: 7px;
    background: #111416;
}

.switch div {
    height: 39px;
    display: grid;
    place-items: center;
}

.switch .on {
    border-radius: 7px;
    background: #255a86;
}

.list {
    width: 38px;
    margin-top: 5px;
    display: grid;
    grid-auto-rows: 40.8px;
    place-items: center;
}

.meter {
    display: flex;
    flex-direction: column;
    font: bold 11px/14px "DejaVu Serif", serif;
}

.meter span {
    height: 13px;
    line-height: 13px;
}

.bpm {
    display: flex;
    align-items: center;
    font: 600 10px Inter, sans-serif;
    letter-spacing: -0.6px;
}

.forte {
    font: italic bold 22px/20px "Liberation Serif", serif;
}

.trill {
    font: italic bold 23px/20px "Liberation Serif", serif;
    letter-spacing: -1px;
}

/* status bar */
.status {
    height: 29px;
    flex: none;
    margin-top: 1px;
    display: flex;
    align-items: center;
    padding: 1px 0 0 3px;
    background: #1f2428;
    font-size: 13px;
}

.sbtn {
    height: 23px;
    display: flex;
    align-items: center;
    justify-content: center;
    border-radius: 3px;
    background: #353f4b;
}

.note {
    width: 43px;
    gap: 11px;
}

.seg {
    height: 23px;
    display: flex;
    border-radius: 3px;
    overflow: hidden;
    background: #353f4b;
}

.seg span {
    display: flex;
    flex: 1;
    align-items: center;
    justify-content: center;
}

.seg .on {
    border-radius: 3px;
    background: #255a86;
}

.pitch {
    width: 87px;
    margin: 0 11px 0 7px;
    font-weight: 500;
}

.selection {
    width: 59px;
}

.expand {
    width: 192px;
    height: 27px;
    display: grid;
    place-items: center;
    border: solid #14171a;
    border-width: 0 2px;
}

.toggle {
    width: 21px;
    height: 13px;
    margin: 0 7px 0 5px;
    border-radius: 7px;
    background: radial-gradient(circle at 15px 6.5px, #40a9ff 5.5px, #2d3947 6px);
}

.follow {
    width: 38px;
}

.pointer {
    width: 68px;
}

.views {
    width: 183px;
    margin: 0 6px 0 7px;
}

.views .on {
    flex: 0 0 56px;
}

.views span:nth-child(2) {
    flex: 0 0 71px;
}

.spreads {
    width: 130px;
    margin-right: 6px;
}

.search {
    width: 26px;
}

.zoom {
    width: 84px;
    margin: 0 2px;
    padding: 0 8px;
    justify-content: space-between;
}

.step {
    width: 26px;
    margin-right: 2px;
}
```
